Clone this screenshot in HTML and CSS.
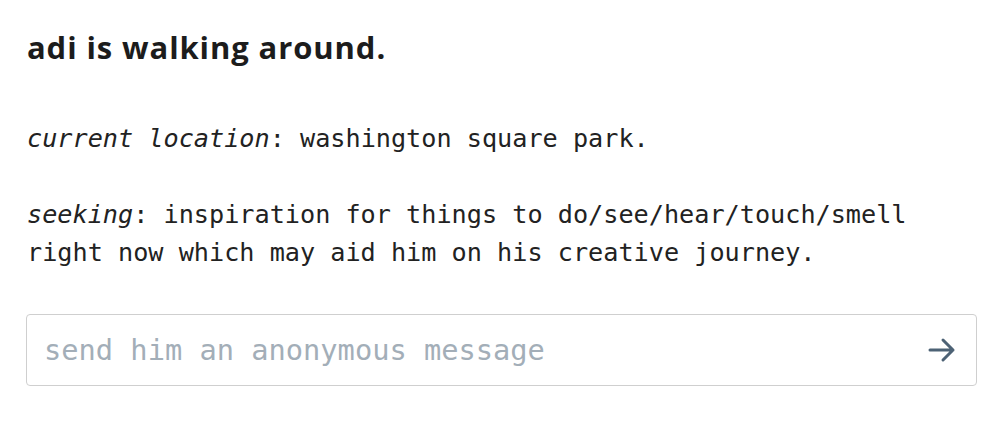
FILE: index.html
```html
<!DOCTYPE html>
<html>
<head>
<meta charset="utf-8">
<link rel="stylesheet" href="styles.css">
</head>
<body>
<main class="page">
  <h1 class="title">adi is walking around.</h1>
  <p class="info"><em>current location</em>: washington square park.</p>
  <p class="info"><em>seeking</em>: inspiration for things to do/see/hear/touch/smell right now which may aid him on his creative journey.</p>
  <form class="msg">
    <input class="msg-input" type="text" placeholder="send him an anonymous message">
    <button class="msg-send" type="button" aria-label="send">
      <svg width="28" height="26" viewBox="0 0 28 26" fill="none" stroke="#4d6275" stroke-width="3" stroke-linecap="round" stroke-linejoin="round"><path d="M2 13h23M15 3l10 10-10 10"/></svg>
    </button>
  </form>
</main>
</body>
</html>
```
FILE: styles.css
```css
html, body { margin: 0; background: #fff; }
.page { padding: 27px 23px 0 27px; color: #1c1c1c; }
.title {
  font-family: "Open Sans", Inter, sans-serif;
  font-weight: 700;
  font-size: 31px;
  letter-spacing: 0.9px;
  line-height: 40px;
  margin: 0 0 53px;
}
.info {
  font-family: "DejaVu Sans Mono", "Liberation Mono", monospace;
  font-size: 25.2px;
  line-height: 38px;
  margin: 0 0 38px;
  color: #222;
  max-width: 920px;
}
.info em { font-style: italic; }
.msg {
  display: flex;
  align-items: center;
  border: 1px solid #cfcfcf;
  border-radius: 4px;
  height: 72px;
  box-sizing: border-box;
  margin-top: 42px;
  margin-left: -1px;
}
.msg-input {
  flex: 1;
  min-width: 0;
  border: 0;
  outline: 0;
  background: transparent;
  font-family: "DejaVu Sans Mono", "Liberation Mono", monospace;
  font-size: 28.7px;
  padding: 0 0 0 17px;
  color: #222;
}
.msg-input::placeholder { color: #a3aeb8; }
.msg-send {
  border: 0;
  background: transparent;
  padding: 0;
  margin-right: 20px;
  display: flex;
  align-items: center;
}
```
